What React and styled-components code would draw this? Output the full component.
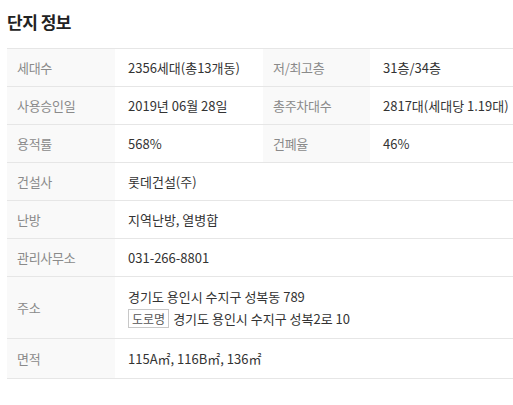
import { Fragment } from "react";
import styled, { createGlobalStyle } from "styled-components";

const GlobalStyle = createGlobalStyle`
  body {
    margin: 0;
    background: #fff;
    font-family: "Noto Sans CJK KR", "Noto Sans", sans-serif;
  }
`

const Section = styled.section`
  padding: 0 0 0 7px;
`

const Title = styled.h2`
  margin: 0;
  height: 48px;
  box-sizing: border-box;
  padding-top: 9px;
  font-size: 17px;
  font-weight: bold;
  color: #222;
  letter-spacing: -0.5px;
`

const Grid = styled.div`
  display: grid;
  grid-template-columns: 108px 148px 107px 1fr;
  border-top: 1px solid #e6e6e6;
`

const Label = styled.div`
  display: flex;
  align-items: center;
  min-height: 37px;
  padding-left: 10px;
  background: #f9f9f9;
  border-bottom: 1px solid #e6e6e6;
  font-size: 13px;
  color: #8a8a8a;
  letter-spacing: -0.3px;
`

const Value = styled.div`
  display: flex;
  flex-direction: column;
  justify-content: center;
  grid-column: span ${({ $span }) => $span || 1};
  min-height: ${({ $height }) => $height || 37}px;
  padding-left: 13px;
  border-bottom: 1px solid #e6e6e6;
  font-size: 13px;
  color: #333;
  line-height: 22px;
  white-space: nowrap;
`

const Badge = styled.span`
  display: inline-block;
  padding: 0 3px;
  margin-right: 4px;
  border: 1px solid #c8c8c8;
  font-size: 12px;
  line-height: 17px;
  color: #555;
`

const rows = [
  [["세대수", "2356세대(총13개동)"], ["저/최고층", "31층/34층"]],
  [["사용승인일", "2019년 06월 28일"], ["총주차대수", "2817대(세대당 1.19대)"]],
  [["용적률", "568%"], ["건폐율", "46%"]],
  [["건설사", "롯데건설(주)"]],
  [["난방", "지역난방, 열병합"]],
  [["관리사무소", "031-266-8801"]],
];

const App = () => {
  return (
    <Section>
      <GlobalStyle />
      <Title>단지 정보</Title>
      <Grid>
        {rows.map((row) =>
          row.map(([label, value]) => (
            <Fragment key={label}>
              <Label>{label}</Label>
              <Value $span={row.length === 1 ? 3 : 1}>{value}</Value>
            </Fragment>
          ))
        )}
        <Label>주소</Label>
        <Value $span={3} $height={61}>
          <div>경기도 용인시 수지구 성복동 789</div>
          <div>
            <Badge>도로명</Badge>경기도 용인시 수지구 성복2로 10
          </div>
        </Value>
        <Label>면적</Label>
        <Value $span={3} $height={39}>115A㎡, 116B㎡, 136㎡</Value>
      </Grid>
    </Section>
  );
};

export default App;
